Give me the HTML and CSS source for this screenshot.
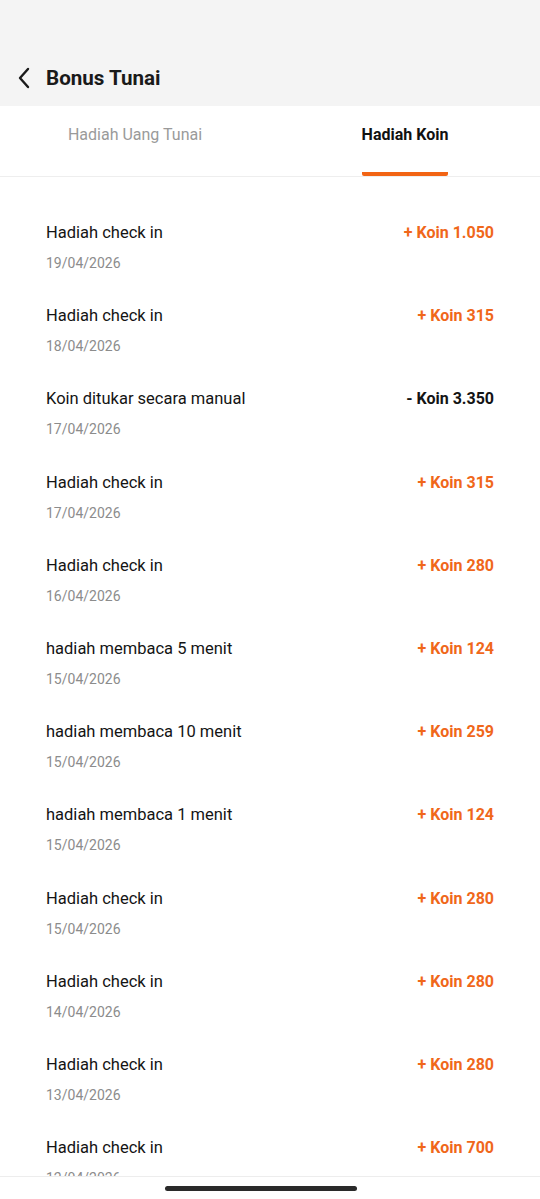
FILE: index.html
```html
<!DOCTYPE html>
<html lang="id">
<head>
<meta charset="UTF-8" />
<meta name="viewport" content="width=device-width, initial-scale=1.0" />
<title>Bonus Tunai</title>
<link rel="stylesheet" href="styles.css">
</head>
<body>

<div class="app">
  <div class="header">
    <button class="back" aria-label="Kembali">
      <svg width="14" height="22" viewBox="0 0 14 22"><path d="M11 2 L3 11 L11 20" fill="none" stroke="#1a1a1a" stroke-width="2.4" stroke-linecap="round" stroke-linejoin="round"/></svg>
    </button>
    <h1>Bonus Tunai</h1>
  </div>

  <div class="tabs">
    <div class="tab">Hadiah Uang Tunai</div>
    <div class="tab active"><span>Hadiah Koin</span></div>
  </div>

  <div class="list">
    <div class="item"><div class="row"><span class="name">Hadiah check in</span><span class="amount plus">+ Koin 1.050</span></div><div class="date">19/04/2026</div></div>
    <div class="item"><div class="row"><span class="name">Hadiah check in</span><span class="amount plus">+ Koin 315</span></div><div class="date">18/04/2026</div></div>
    <div class="item"><div class="row"><span class="name">Koin ditukar secara manual</span><span class="amount">- Koin 3.350</span></div><div class="date">17/04/2026</div></div>
    <div class="item"><div class="row"><span class="name">Hadiah check in</span><span class="amount plus">+ Koin 315</span></div><div class="date">17/04/2026</div></div>
    <div class="item"><div class="row"><span class="name">Hadiah check in</span><span class="amount plus">+ Koin 280</span></div><div class="date">16/04/2026</div></div>
    <div class="item"><div class="row"><span class="name">hadiah membaca 5 menit</span><span class="amount plus">+ Koin 124</span></div><div class="date">15/04/2026</div></div>
    <div class="item"><div class="row"><span class="name">hadiah membaca 10 menit</span><span class="amount plus">+ Koin 259</span></div><div class="date">15/04/2026</div></div>
    <div class="item"><div class="row"><span class="name">hadiah membaca 1 menit</span><span class="amount plus">+ Koin 124</span></div><div class="date">15/04/2026</div></div>
    <div class="item"><div class="row"><span class="name">Hadiah check in</span><span class="amount plus">+ Koin 280</span></div><div class="date">15/04/2026</div></div>
    <div class="item"><div class="row"><span class="name">Hadiah check in</span><span class="amount plus">+ Koin 280</span></div><div class="date">14/04/2026</div></div>
    <div class="item"><div class="row"><span class="name">Hadiah check in</span><span class="amount plus">+ Koin 280</span></div><div class="date">13/04/2026</div></div>
    <div class="item"><div class="row"><span class="name">Hadiah check in</span><span class="amount plus">+ Koin 700</span></div><div class="date">12/04/2026</div></div>
  </div>

  <div class="navbar">
    <div class="home-bar"></div>
  </div>
</div>

</body>
</html>
```

FILE: styles.css
```css
* {
  box-sizing: border-box;
}

body {
  margin: 0;
  font-family: Roboto, "Noto Sans", sans-serif;
  background: #fff;
  color: #111;
}

.app {
  display: flex;
  flex-direction: column;
  height: 1199px;
  overflow: hidden;
}

.header {
  height: 106px;
  background: #f4f4f4;
  display: flex;
  align-items: center;
  padding: 50px 0 0 14px;
  flex-shrink: 0;
}

.back {
  border: none;
  background: none;
  padding: 0;
  margin-right: 12px;
  width: 20px;
  height: 24px;
  display: flex;
  align-items: center;
  justify-content: center;
}

.header h1 {
  margin: 0;
  font-size: 20.6px;
  font-weight: 700;
  color: #1a1a1a;
}

.tabs {
  display: flex;
  height: 71px;
  border-bottom: 1px solid #eeeeee;
  flex-shrink: 0;
}

.tab {
  flex: 1;
  display: flex;
  justify-content: center;
  padding-top: 19px;
  font-size: 16px;
  color: #9a9a9a;
}

.tab.active {
  color: #111;
  font-weight: 700;
}

.tab.active span {
  height: 51px;
  border-bottom: 4px solid #f26414;
  border-radius: 0 0 2px 2px;
}

.list {
  flex: 1;
  overflow: hidden;
  padding-top: 24px;
}

.item {
  height: 83.2px;
  padding: 21px 46px 0 46px;
}

.row {
  display: flex;
  justify-content: space-between;
  line-height: 22px;
  font-size: 16px;
}

.name {
  font-size: 16.5px;
  font-weight: 400;
  color: #141414;
}

.amount {
  font-weight: 700;
  color: #141414;
}

.amount.plus {
  color: #f0671a;
}

.date {
  margin-top: 9px;
  line-height: 20px;
  font-size: 14px;
  color: #8c8c8c;
}

.navbar {
  height: 23px;
  border-top: 1px solid #ededed;
  background: #fff;
  flex-shrink: 0;
  padding: 9px 0 0 165px;
}

.home-bar {
  width: 192px;
  height: 5px;
  border-radius: 3px;
  background: #2a2a2a;
}
```
